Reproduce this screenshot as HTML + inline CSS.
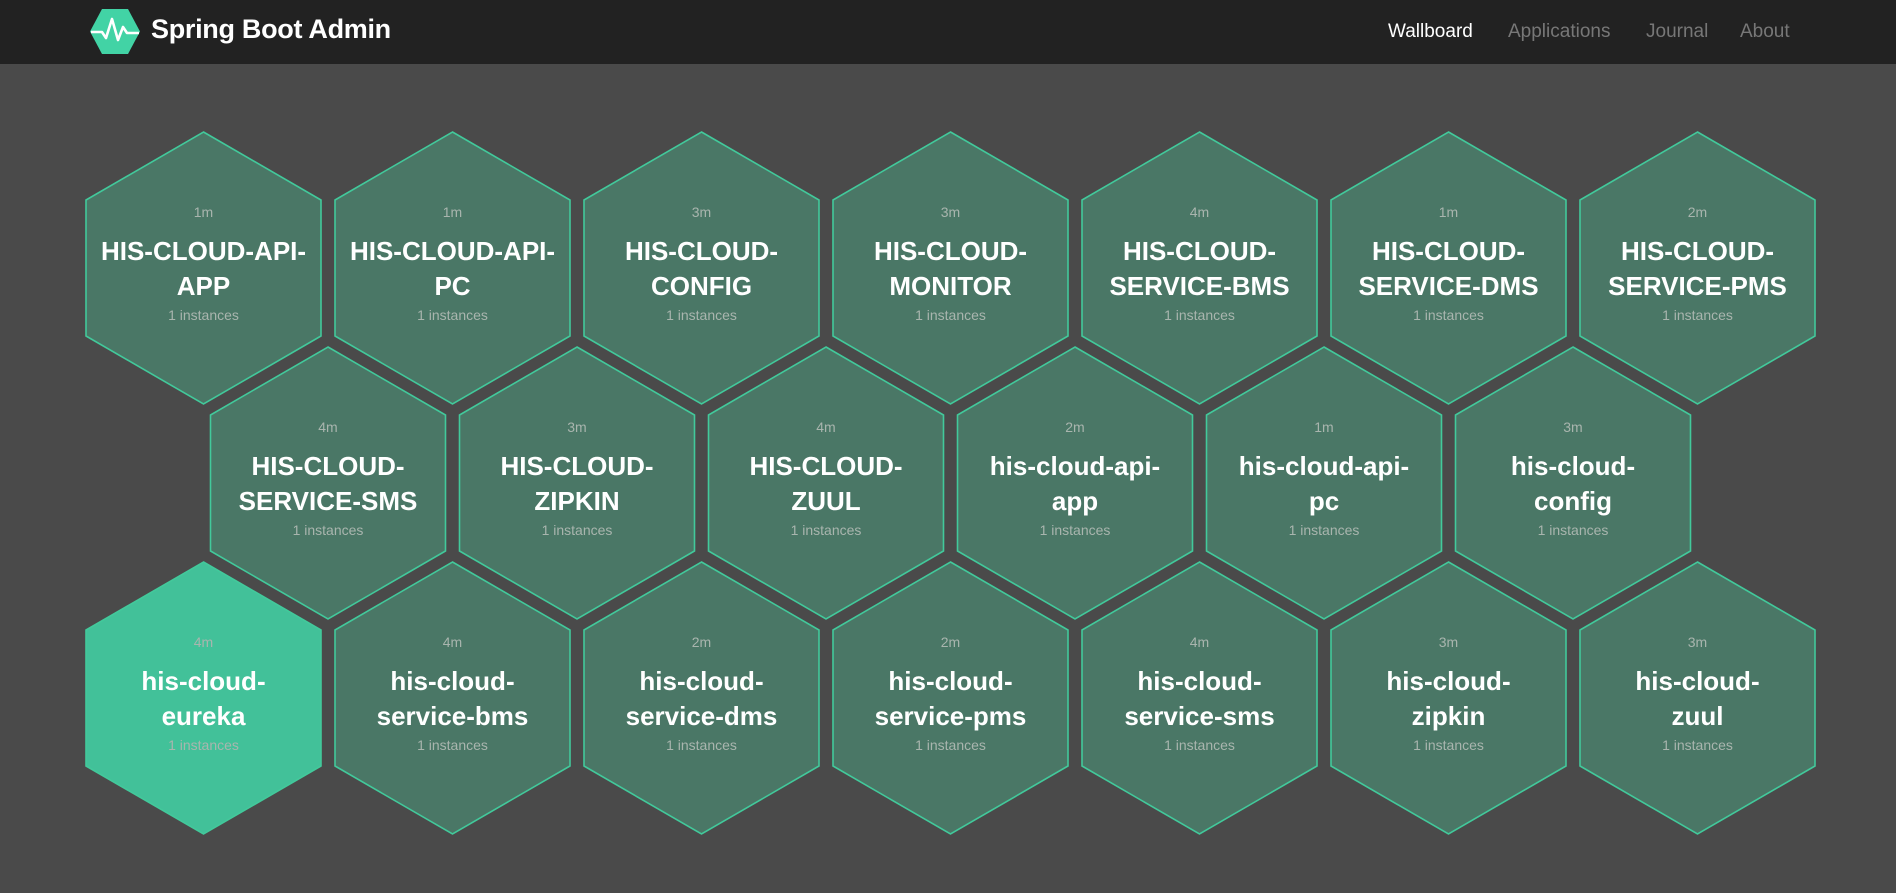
<!DOCTYPE html>
<html><head><meta charset="utf-8"><style>
*{margin:0;padding:0;box-sizing:border-box}
body{width:1896px;height:893px;background:#4a4a4a;font-family:"Liberation Sans",sans-serif;position:relative;overflow:hidden}
.nav{position:absolute;left:0;top:0;width:1896px;height:64px;background:#222}
.title{position:absolute;left:151px;top:14px;color:#fff;font-size:27px;font-weight:bold;letter-spacing:-0.3px}
.nl{position:absolute;top:21px;font-size:19px;color:#777}
svg.hx{position:absolute;left:0;top:0}
.t{position:absolute;width:237px;text-align:center;color:#fff}
.m{position:absolute;width:100%;font-size:14px;color:#a9b5ae}
.n{position:absolute;width:100%;font-size:26px;font-weight:bold;line-height:35px}
.i{position:absolute;width:100%;font-size:14px;color:#a9b5ae}
</style></head><body>
<div class="nav">
<svg style="position:absolute;left:90px;top:9px" width="50" height="45" viewBox="0 0 50 45"><polygon points="12,0 38,0 50,22.5 38,45 12,45 0,22.5" fill="#42d3a5"/><polyline points="1,23 12,23 16,29 22,10 28,31 33,18 37,24 49,24" fill="none" stroke="#fff" stroke-width="2.6" stroke-linejoin="round"/></svg>
<div class="title">Spring Boot Admin</div>
<div class="nl" style="left:1388px;color:#fff">Wallboard</div>
<div class="nl" style="left:1508px">Applications</div>
<div class="nl" style="left:1646px">Journal</div>
<div class="nl" style="left:1740px">About</div>
</div>
<svg class="hx" width="1896" height="893" id="s"></svg>
<div id="c"></div>
<script>
var rows=[
{x:85,y:131,a:[["1m","HIS-CLOUD-API-","APP"],["1m","HIS-CLOUD-API-","PC"],["3m","HIS-CLOUD-","CONFIG"],["3m","HIS-CLOUD-","MONITOR"],["4m","HIS-CLOUD-","SERVICE-BMS"],["1m","HIS-CLOUD-","SERVICE-DMS"],["2m","HIS-CLOUD-","SERVICE-PMS"]]},
{x:209.5,y:346,a:[["4m","HIS-CLOUD-","SERVICE-SMS"],["3m","HIS-CLOUD-","ZIPKIN"],["4m","HIS-CLOUD-","ZUUL"],["2m","his-cloud-api-","app"],["1m","his-cloud-api-","pc"],["3m","his-cloud-","config"]]},
{x:85,y:561,a:[["4m","his-cloud-","eureka"],["4m","his-cloud-","service-bms"],["2m","his-cloud-","service-dms"],["2m","his-cloud-","service-pms"],["4m","his-cloud-","service-sms"],["3m","his-cloud-","zipkin"],["3m","his-cloud-","zuul"]]}];
var s="",h="";
rows.forEach(function(r,ri){r.a.forEach(function(d,i){var x=r.x+249*i,y=r.y;var hl=(ri==2&&i==0);
var p=[[118.5,1],[236,69],[236,205],[118.5,273],[1,205],[1,69]].map(function(q){return (x+q[0])+","+(y+q[1])}).join(" ");
s+='<polygon points="'+p+'" fill="'+(hl?'#42c199':'#4a7766')+'" stroke="#42c99b" stroke-width="1.6"/>';
h+='<div class="t" style="left:'+x+'px;top:'+y+'px"><div class="m" style="top:73px">'+d[0]+'</div><div class="n" style="top:103px">'+d[1]+'<br>'+d[2]+'</div><div class="i" style="top:176px">1 instances</div></div>';});});
document.getElementById("s").innerHTML=s;document.getElementById("c").innerHTML=h;
</script>
</body></html>
